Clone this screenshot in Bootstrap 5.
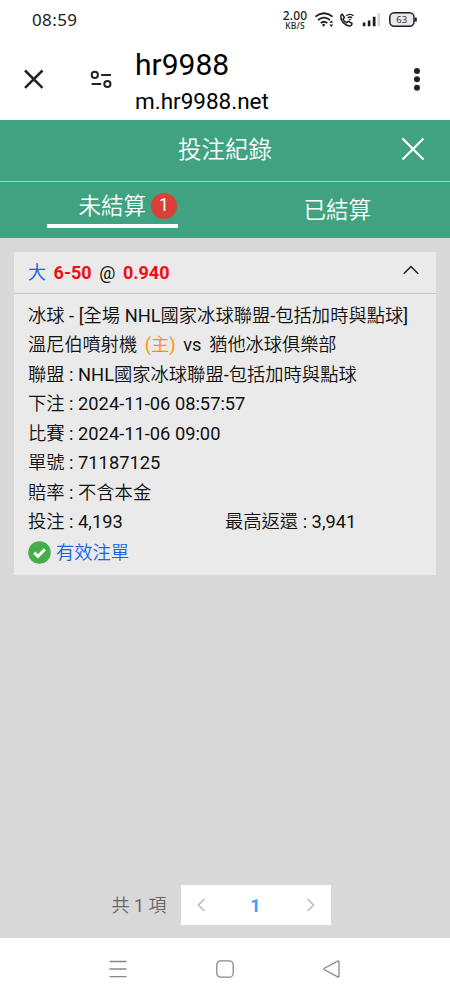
<!DOCTYPE html>
<html lang="zh-Hant">
<head>
<meta charset="utf-8">
<meta name="viewport" content="width=device-width, initial-scale=1">
<title>投注紀錄</title>
<link rel="stylesheet" href="https://cdn.jsdelivr.net/npm/bootstrap@5.3.0/dist/css/bootstrap.min.css">
<style>
body{font-family:Roboto,"Noto Sans CJK TC DemiLight","Noto Sans CJK TC",sans-serif;font-size:18.3px;color:#111;background:#d8d8d8;overflow:hidden;letter-spacing:0}
svg{display:block;flex:none}
.screen{height:1000px}
.statusbar{height:40px;padding:0 32px 0 32px}
.clock{font:17px/40px "Noto Sans",sans-serif;color:#222;letter-spacing:.4px}
.speed{width:26px;color:#222;font-family:"Noto Sans",sans-serif;font-weight:500}
.speed div{font-size:12px;line-height:10px;height:10px;letter-spacing:.2px}
.speed .unit{font-size:8.5px;line-height:9px;height:9px;letter-spacing:.2px}
.browserbar{height:80px;padding:0 24px}
.settings-icon{margin:30px 1px 0 46px}
.site{font-size:30px;line-height:34px}
.host{font-size:22.5px;line-height:38px}
.green{background:#40a281;color:#fff}
.titlebar{height:62px;border-bottom:1px solid #a3d3c2;font-size:23.5px}
.titlebar svg{right:25px;top:17px}
.tabs{height:56px;font-size:22.5px}
.tabs a{color:#fff;text-decoration:none}
.tab-on{width:131px;height:46px;border-bottom:4px solid #fff;margin-left:47px;padding:8px 1px 0 0}
.count{width:26px;height:26px;background:#db4038;font-size:17.5px;margin-left:5px;margin-top:-3px}
.tab-off{margin-right:79px;padding-top:1px}
.bet{margin:14px 14px 0;border:0;border-radius:0;background:#eaeaea;height:323px;color:#111}
.bet-head{height:42px;padding:0 17px 1px 14px;border-bottom:1px solid #c8c8c8;font-size:18px;font-weight:700;word-spacing:3.1px}
.side{font-weight:400;font-family:"Noto Sans CJK TC",sans-serif;line-height:1}
.blue{color:#1463e8}.redtext{color:#f10d13}.orange{color:#ff8d12}
.bet-body{padding:6.5px 14px 0;line-height:29.5px;white-space:nowrap}
.bet-body>div{height:29.5px}
.teams{font-size:18.2px;word-spacing:3.2px}
.pagebar{margin-bottom:13px;gap:14px;color:#666;padding-right:8px;font-size:18px}
.pager{width:150px;height:40px;background:#fff;padding:0 16px}
.pager b{color:#409eff}
.sysnav{height:62px;padding:0 109px}
</style>
</head>
<body>
<div class="screen d-flex flex-column">
 <header class="bg-white">
  <div class="statusbar d-flex align-items-center justify-content-between">
   <span class="clock">08:59</span>
   <div class="d-flex align-items-center">
    <div class="speed text-center"><div>2.00</div><div class="unit">KB/S</div></div>
    <svg width="110" height="22" viewBox="309 9 110 22" fill="none" stroke="#1c1c1c" stroke-width="1.8">
     <path d="M316.4 16.6Q325 9.8 333.6 16.6M319 20Q325 15.2 331 20M321.7 23.1Q325 20.4 328.3 23.1"/><circle cx="324.6" cy="25.1" r="1.3" fill="#1c1c1c" stroke="none"/><path d="M330.4 22.8l1.9-2.3 1.9 2.3zM330.4 24.6l1.9 2.3 1.9-2.3z" fill="#1c1c1c" stroke="none"/>
     <path stroke-width="1.5" d="M343.2 14.3l2.2 3.1-1.4 1.8c.8 1.7 2 2.9 3.6 3.5l1.6-1.3 3.5 1.6c.8 1.2-.2 3-2 3-5.2-.6-9-4.6-8.9-9.8 0-1 .6-1.6 1.4-1.9z"/><path stroke-width="1.3" d="M347.2 15.8q3.7-3 7.4 0M348.7 18q2.2-1.9 4.4 0M350 20q1-.8 1.8 0"/>
     <path fill="#1c1c1c" stroke="none" d="M363.8 22.6h2.6v3.6h-2.6zM368.8 20.5h2.6v5.7h-2.6zM373.8 16.8h2.7v9.4h-2.7z"/><path fill="#d5d5d5" stroke="none" d="M378.5 13h2.6v13.2h-2.6z"/>
     <rect x="390.8" y="12.8" width="24.2" height="13.5" rx="4.5" fill="#e9e9e9" stroke-width="1.5"/><path d="M416.8 17.6v4" stroke-width="2"/>
     <text x="402.7" y="23.2" text-anchor="middle" fill="#333" stroke="none" font-family="Noto Sans" font-size="9.5">63</text>
    </svg>
   </div>
  </div>
  <div class="browserbar d-flex">
   <svg width="20" height="20" viewBox="0 0 20 20" style="margin-top:29px" fill="none" stroke="#222" stroke-width="2.5"><path d="M1 1.5l17.5 17.3M18.5 1.5L1 18.8"/></svg>
   <svg width="25" height="20" viewBox="0 0 25 20" class="settings-icon" fill="none" stroke="#222" stroke-width="2"><circle cx="4.8" cy="4.9" r="3.1"/><path d="M11.2 5H21M1.6 14h9.6"/><circle cx="17.4" cy="14" r="3.1"/></svg>
   <div class="ms-3 text-black flex-grow-1"><div class="site mt-1 pt-1 ps-1" style="margin-left:-1px">hr9988</div><div class="host ps-1" style="margin-left:-1px">m.hr9988.net</div></div>
   <svg width="8" height="24" viewBox="0 0 8 24" style="margin-top:27px;margin-right:5px" fill="#222"><circle cx="4" cy="4" r="3"/><circle cx="4" cy="12.3" r="3"/><circle cx="4" cy="20.7" r="3"/></svg>
  </div>
 </header>
 <section class="green">
  <div class="titlebar position-relative d-flex align-items-center justify-content-center">投注紀錄
   <svg class="position-absolute" width="24" height="24" viewBox="0 0 24 24" fill="none" stroke="#fff" stroke-width="2.2"><path d="M1.5 1.5l21 21M22.5 1.5l-21 21"/></svg>
  </div>
  <nav class="tabs d-flex justify-content-between">
   <a href="#" class="tab-on d-flex align-items-center justify-content-end">未結算<span class="count rounded-circle d-flex align-items-center justify-content-center">1</span></a>
   <a href="#" class="tab-off d-flex align-items-center">已結算</a>
  </nav>
 </section>
 <main class="flex-grow-1 d-flex flex-column justify-content-between">
  <article class="card bet">
   <div class="bet-head d-flex align-items-center justify-content-between">
    <div><span class="blue side">大</span> <span class="redtext">6-50</span> <span class="fw-normal">@</span> <span class="redtext">0.940</span></div>
    <svg width="16" height="10" viewBox="0 0 16 10" fill="none" stroke="#222" stroke-width="1.5" class="mb-1"><path d="M.8 8.7L8 1.5l7.2 7.2"/></svg>
   </div>
   <div class="bet-body">
    <div>冰球 - [全場 NHL國家冰球聯盟-包括加時與點球]</div>
    <div class="teams">溫尼伯噴射機 <span class="orange">(主)</span> vs 猶他冰球俱樂部</div>
    <div>聯盟 : NHL國家冰球聯盟-包括加時與點球</div>
    <div>下注 : 2024-11-06 08:57:57</div>
    <div>比賽 : 2024-11-06 09:00</div>
    <div>單號 : 71187125</div>
    <div>賠率 : 不含本金</div>
    <div class="row g-0"><span class="col-6">投注 : 4,193</span><span class="col-6">最高返還 : 3,941</span></div>
    <div class="d-flex align-items-center blue" style="padding-top:2px"><svg width="23" height="23" viewBox="0 0 23 23" class="me-1"><circle cx="11.5" cy="11.5" r="11.3" fill="#45ae4b"/><path d="M6.2 11.6l3.7 3.7 7-7" fill="none" stroke="#fff" stroke-width="3"/></svg><span class="ps-1" style="margin-left:-3px">有效注單</span></div>
   </div>
  </article>
  <div class="pagebar d-flex align-items-center justify-content-center">
   <span>共 1 項</span>
   <div class="pager d-flex align-items-center justify-content-between">
    <svg width="9" height="14" viewBox="0 0 9 14" fill="none" stroke="#bbb" stroke-width="1.6"><path d="M7.5 1L1.5 7l6 6"/></svg><b>1</b>
    <svg width="9" height="14" viewBox="0 0 9 14" fill="none" stroke="#bbb" stroke-width="1.6"><path d="M1.5 1l6 6-6 6"/></svg>
   </div>
  </div>
 </main>
 <footer class="sysnav bg-white d-flex align-items-center justify-content-between">
  <svg width="18" height="18" viewBox="0 0 18 18" fill="none" stroke="#888" stroke-width="1.3"><path d="M.5 1.5h17M.5 9h17M.5 16.7h17"/></svg>
  <svg width="18" height="18" viewBox="0 0 18 18" fill="none" stroke="#888" stroke-width="1.3"><rect x=".8" y=".8" width="16.4" height="16.4" rx="4"/></svg>
  <svg width="18" height="18" viewBox="0 0 18 18" fill="none" stroke="#888" stroke-width="1.3"><path d="M1.4 8.2L14.7 1.1q1.3-.5 1.3.9v14q0 1.4-1.3.9L1.4 9.8q-1-.8 0-1.6z"/></svg>
 </footer>
</div>
<script src="https://cdn.jsdelivr.net/npm/bootstrap@5.3.0/dist/js/bootstrap.bundle.min.js"></script>
</body>
</html>
